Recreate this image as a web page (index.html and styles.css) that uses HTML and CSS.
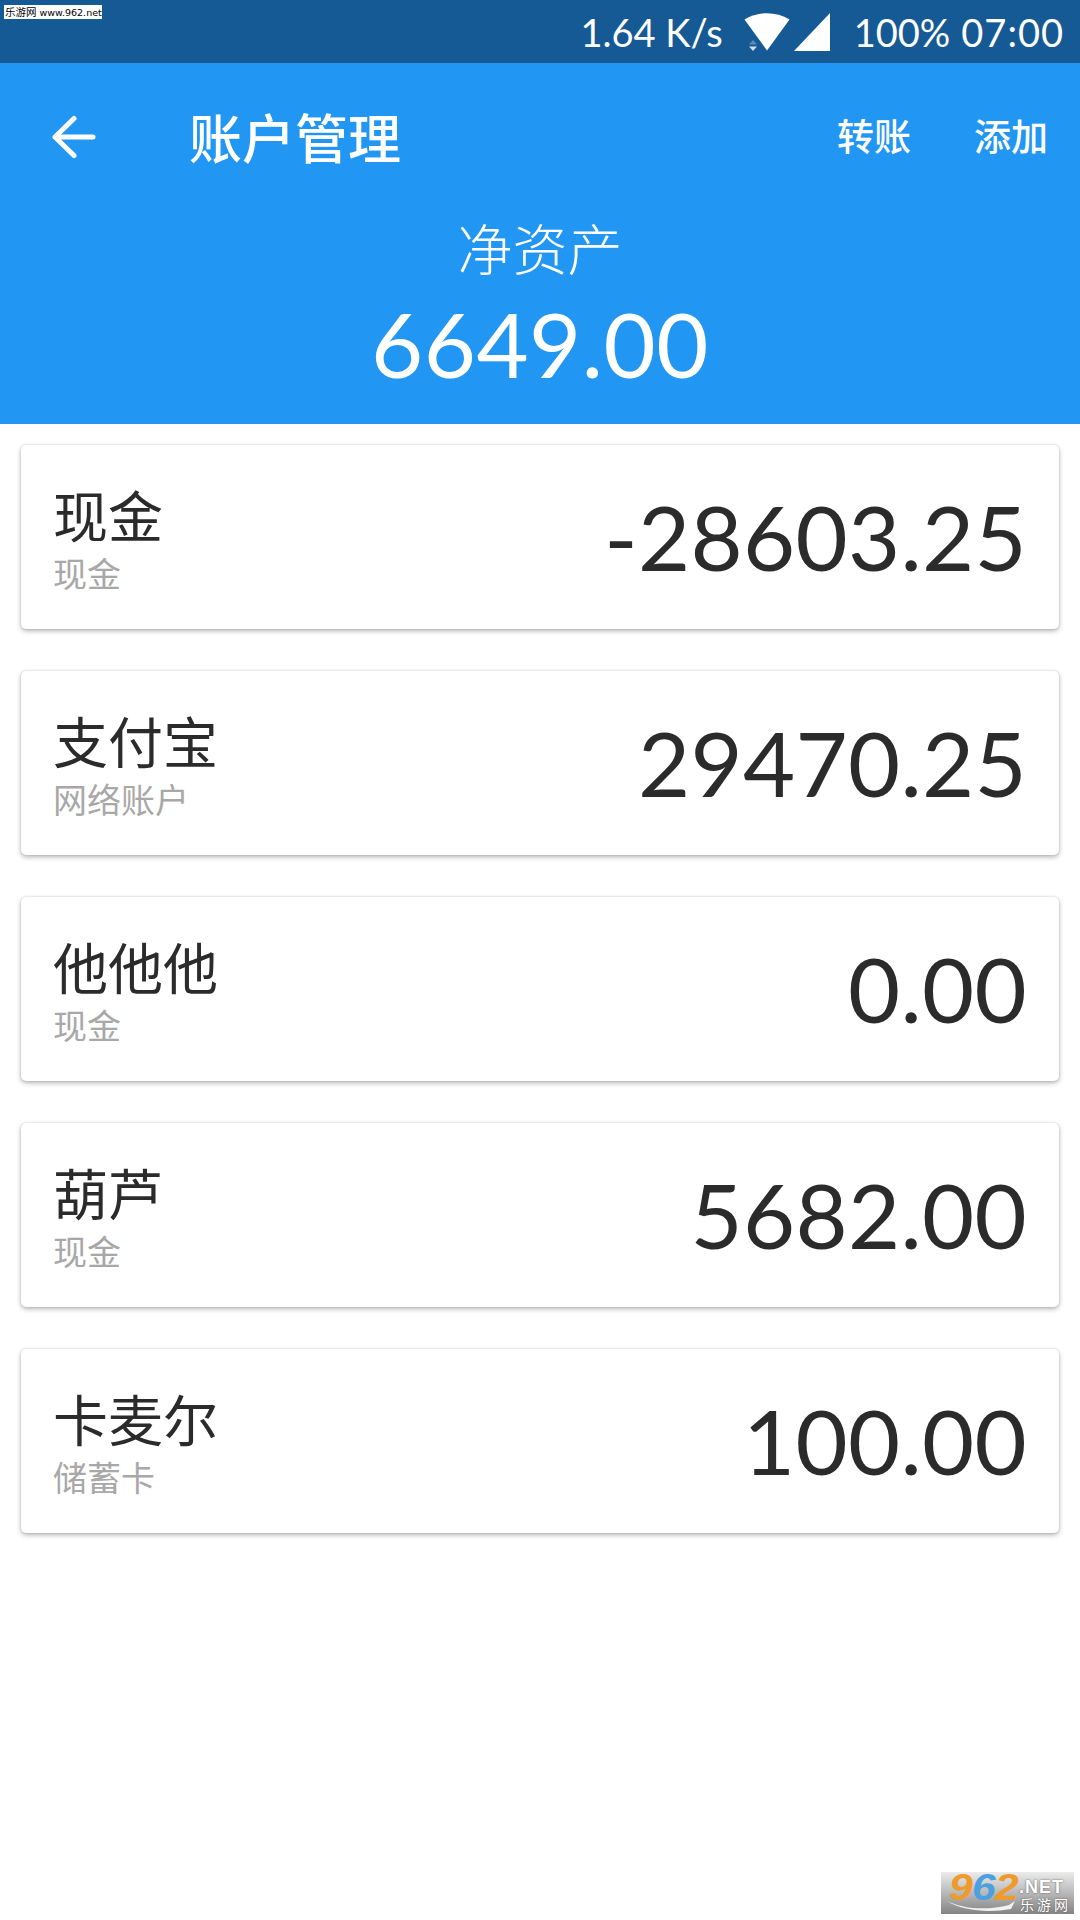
FILE: index.html
```html
<!DOCTYPE html>
<html lang="zh-CN">
<head>
<meta charset="utf-8">
<title>账户管理</title>
<link rel="stylesheet" href="styles.css">
</head>
<body>
<div class="page">
  <div class="statusbar">
    <span class="net">1.64 K/s</span>
    <svg class="ico-wifi" width="46" height="38" viewBox="0 0 46 38"><path d="M0.500 6.500C14-2 32-2 45.500 6.500L23 37.500Z" fill="#fff"/><path d="M5 31.500l4-4.500 4 4.500z" fill="#5f8bb5"/><path d="M5 33.500h8l-4 4.500z" fill="#cfe0ef"/></svg>
    <svg class="ico-signal" width="36" height="38" viewBox="0 0 36 38"><path d="M36 0V38H0Z" fill="#fff"/></svg>
    <span class="batt">100%</span>
    <span class="clock">07:00</span>
  </div>
  <header class="appbar">
    <div class="toolbar">
      <svg class="ico-back" width="44" height="44" viewBox="0 0 44 44"><path d="M3 22H41M22 3.500L3 22L22 40.500" fill="none" stroke="#fff" stroke-width="5" stroke-linecap="round" stroke-linejoin="round"/></svg>
      <h1 class="title">账户管理</h1>
      <span class="action action-first">转账</span>
      <span class="action">添加</span>
    </div>
    <div class="net-label">净资产</div>
    <div class="net-value">6649.00</div>
  </header>
  <main class="list">
    <div class="card"><div class="info"><div class="name">现金</div><div class="type">现金</div></div><div class="amount">-28603.25</div></div>
    <div class="card"><div class="info"><div class="name">支付宝</div><div class="type">网络账户</div></div><div class="amount">29470.25</div></div>
    <div class="card"><div class="info"><div class="name">他他他</div><div class="type">现金</div></div><div class="amount">0.00</div></div>
    <div class="card"><div class="info"><div class="name">葫芦</div><div class="type">现金</div></div><div class="amount">5682.00</div></div>
    <div class="card"><div class="info"><div class="name">卡麦尔</div><div class="type">储蓄卡</div></div><div class="amount">100.00</div></div>
  </main>
  <div class="wm-top"><span class="wm-cn">乐游网</span> www.962.net</div>
  <div class="wm-logo">
    <svg class="wm-swoosh" width="70" height="14" viewBox="0 0 70 14"><path d="M0 2C18 11 42 11 62 6L68 2L64 10C42 14 16 12 0 2Z" fill="#f2f2f2"/></svg>
    <span class="wm-digit wm-9">9</span><span class="wm-digit wm-6">6</span><span class="wm-digit wm-2">2</span><span class="wm-net">.NET</span><span class="wm-sub">乐游网</span>
  </div>
</div>
</body>
</html>
```
FILE: styles.css
```css
* { box-sizing: border-box; }
html, body { margin: 0; padding: 0; }
body { background: #fff; font-family: Lato, "Noto Sans CJK SC", sans-serif; }
.page { position: relative; width: 1080px; height: 1920px; overflow: hidden; background: #fff; }

.statusbar { height: 63px; background: #155a94; color: #fff; display: flex; align-items: center; justify-content: flex-end; padding-right: 16px; font-size: 38px; font-family: Lato, sans-serif; font-weight: 400; }
.net { margin-right: 21px; }
.ico-wifi { margin-right: 4px; }
.ico-signal { margin-right: 24px; }
.batt { margin-right: 11px; }
.clock { letter-spacing: 1px; }

.appbar { height: 361px; background: #2196f3; color: #fff; }
.toolbar { height: 147px; display: flex; align-items: center; padding: 0 32px 0 52px; }
.ico-back { flex: none; }
.title { margin: -2px 0 0 93px; flex: 1; font-size: 53px; line-height: 60px; font-weight: 500; font-family: "Noto Sans CJK SC", sans-serif; }
.action { font-size: 37px; line-height: 50px; margin-top: -4px; font-weight: 500; font-family: "Noto Sans CJK SC", sans-serif; }
.action-first { margin-right: 63px; }
.net-label { text-align: center; font-size: 55px; line-height: 60px; margin-top: 6px; font-family: "Noto Sans CJK SC", sans-serif; font-weight: 300; }
.net-value { text-align: center; font-size: 90px; line-height: 100px; margin-top: 17px; letter-spacing: .5px; font-family: Lato, sans-serif; font-weight: 400; }

.list { padding: 21px 21px 0; display: flex; flex-direction: column; gap: 42px; }
.card { height: 184px; background: #fff; border-radius: 5px; box-shadow: 0 2px 5px rgba(0,0,0,.3), 0 0 2px rgba(0,0,0,.14); display: flex; align-items: center; justify-content: space-between; padding: 0 32px 0 32px; }
.info { margin-top: 8px; }
.name { font-size: 55px; line-height: 64px; color: #2b2b2b; font-family: "Noto Sans CJK SC", sans-serif; font-weight: 400; }
.type { font-size: 34px; line-height: 56px; color: #a8a8a8; font-family: "Noto Sans CJK SC", sans-serif; font-weight: 400; }
.amount { font-size: 90px; line-height: 110px; margin-top: -2px; letter-spacing: .3px; color: #2b2b2b; font-family: Lato, sans-serif; font-weight: 400; }

.wm-top { position: absolute; left: 4px; top: 5px; width: 98px; height: 14px; background: #fff; color: #000; font: 9.500px/14px "DejaVu Sans", sans-serif; white-space: nowrap; padding-left: 1px; }
.wm-cn { font: 10.500px/14px "Noto Sans CJK SC", sans-serif; }
.wm-logo { position: absolute; left: 941px; top: 1872px; width: 133px; height: 42px; background: linear-gradient(#ececec, #848484); font-family: "Liberation Sans", sans-serif; }
.wm-swoosh { position: absolute; left: 6px; top: 27px; }
.wm-digit { position: absolute; top: -4px; font-size: 37px; line-height: 40px; font-weight: 700; font-style: italic; transform: scaleX(1.15); transform-origin: left; }
.wm-9 { left: 8px; color: #ef9a2c; }
.wm-6 { left: 31px; color: #4d9fe0; }
.wm-2 { left: 54px; color: #ef9a2c; }
.wm-net { position: absolute; left: 78px; top: 5px; font-size: 18px; line-height: 20px; color: #fff; font-weight: 700; letter-spacing: 1px; text-shadow: 0 0 2px #555; }
.wm-sub { position: absolute; left: 79px; top: 22px; font: 14px/20px "Noto Sans CJK SC", sans-serif; color: #fff; letter-spacing: 3px; text-shadow: 0 0 2px #555; }
```
